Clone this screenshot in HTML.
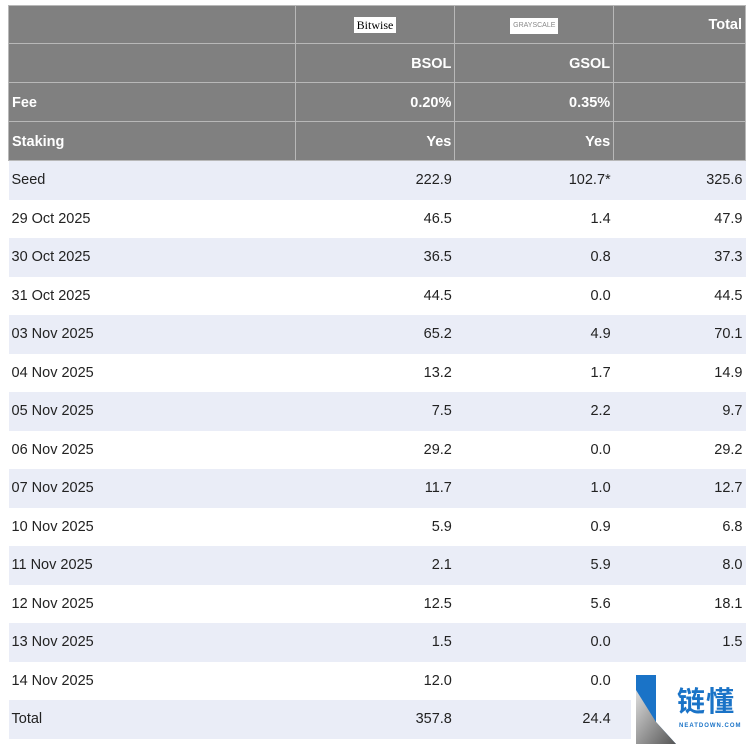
<!DOCTYPE html>
<html><head><meta charset="utf-8"><style>
body{margin:0;width:750px;height:744px;background:#fff;overflow:hidden;position:relative;font-family:"Liberation Sans",Arial,sans-serif;}
table{position:absolute;left:8px;top:5px;border-collapse:collapse;width:738px;}
td{padding:0 3px;font-size:14.5px;color:#222;text-align:right;white-space:nowrap;}
td:first-child{text-align:left;}
tr.h td{background:#808080;color:#fff;font-weight:bold;border:1px solid #b8b8b8;height:28px;line-height:16px;vertical-align:bottom;padding-top:0;padding-bottom:10px;}
tr.d td{height:38.5px;padding-top:0;padding-bottom:0;}
tr.d:nth-child(odd) td{background:#eaedf7;}
.bw{display:inline-block;background:#fff;color:#000;font-family:"Liberation Serif",serif;font-weight:normal;font-size:12px;line-height:14px;padding:1px 3px;}
.gs{display:inline-block;background:#fff;color:#888;font-weight:normal;font-size:7px;line-height:8px;padding:4px 3px;}
.logo{position:absolute;left:631px;top:675px;width:119px;height:69px;background:#fff;}
</style></head><body>
<table>
<colgroup><col style="width:287px"><col style="width:160px"><col style="width:159px"><col style="width:132px"></colgroup>
<tr class="h"><td style="height:27px"></td><td style="text-align:center;vertical-align:middle;padding:0;height:37px"><span class="bw">Bitwise</span></td><td style="text-align:center;vertical-align:middle;padding:0"><span class="gs">GRAYSCALE</span></td><td style="vertical-align:middle;padding-bottom:0">Total</td></tr>
<tr class="h"><td></td><td>BSOL</td><td>GSOL</td><td></td></tr>
<tr class="h"><td>Fee</td><td>0.20%</td><td>0.35%</td><td></td></tr>
<tr class="h"><td>Staking</td><td>Yes</td><td>Yes</td><td></td></tr>
<tbody>
<tr class="d"><td>Seed</td><td>222.9</td><td>102.7*</td><td>325.6</td></tr>
<tr class="d"><td>29 Oct 2025</td><td>46.5</td><td>1.4</td><td>47.9</td></tr>
<tr class="d"><td>30 Oct 2025</td><td>36.5</td><td>0.8</td><td>37.3</td></tr>
<tr class="d"><td>31 Oct 2025</td><td>44.5</td><td>0.0</td><td>44.5</td></tr>
<tr class="d"><td>03 Nov 2025</td><td>65.2</td><td>4.9</td><td>70.1</td></tr>
<tr class="d"><td>04 Nov 2025</td><td>13.2</td><td>1.7</td><td>14.9</td></tr>
<tr class="d"><td>05 Nov 2025</td><td>7.5</td><td>2.2</td><td>9.7</td></tr>
<tr class="d"><td>06 Nov 2025</td><td>29.2</td><td>0.0</td><td>29.2</td></tr>
<tr class="d"><td>07 Nov 2025</td><td>11.7</td><td>1.0</td><td>12.7</td></tr>
<tr class="d"><td>10 Nov 2025</td><td>5.9</td><td>0.9</td><td>6.8</td></tr>
<tr class="d"><td>11 Nov 2025</td><td>2.1</td><td>5.9</td><td>8.0</td></tr>
<tr class="d"><td>12 Nov 2025</td><td>12.5</td><td>5.6</td><td>18.1</td></tr>
<tr class="d"><td>13 Nov 2025</td><td>1.5</td><td>0.0</td><td>1.5</td></tr>
<tr class="d"><td>14 Nov 2025</td><td>12.0</td><td>0.0</td><td></td></tr>
<tr class="d"><td>Total</td><td>357.8</td><td>24.4</td><td></td></tr>
</tbody></table>
<div class="logo">
<svg width="45" height="69" style="position:absolute;left:5px;top:0">
<defs><linearGradient id="g" x1="0" y1="0" x2="1" y2="1"><stop offset="0" stop-color="#ddd"/><stop offset="1" stop-color="#555"/></linearGradient></defs>
<polygon points="0,0 20,0 20,47 40,69 0,69" fill="#1a73c7"/>
<polygon points="0,15 20,47 40,69 0,69" fill="url(#g)"/>
</svg>
<div style="position:absolute;left:46px;top:8px;font-family:'Noto Sans CJK SC',sans-serif;font-size:28px;line-height:34px;color:#1a73c7;font-weight:bold;letter-spacing:1px">链懂</div>
<div style="position:absolute;left:48px;top:48px;font-size:6px;color:#1a73c7;letter-spacing:1px;font-weight:bold">NEATDOWN.COM</div>
</div>
</body></html>
